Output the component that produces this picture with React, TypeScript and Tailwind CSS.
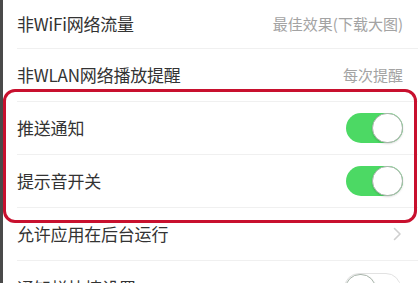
import React from "react";

const font = { fontFamily: '"Noto Sans CJK SC", "Noto Sans", sans-serif' };

function Toggle({ on }: { on: boolean }) {
  return (
    <div
      className={`relative h-[30px] w-[57px] rounded-full ${
        on ? "bg-[#4cd964]" : "bg-white border border-[#e2e2e2]"
      }`}
    >
      <div
        className={`absolute top-0 h-[30px] w-[31px] rounded-full bg-white border border-[#a9b5ab] shadow-[0_1px_2px_rgba(0,0,0,0.15)] ${
          on ? "right-0" : "left-0"
        }`}
      />
    </div>
  );
}

function Chevron() {
  return (
    <svg width="9" height="14" viewBox="0 0 9 14" fill="none">
      <path d="M1.5 1.5L7 7l-5.5 5.5" stroke="#cfcfcf" strokeWidth="1.6" strokeLinecap="round" strokeLinejoin="round" />
    </svg>
  );
}

type Row = { label: string; value?: string; toggle?: boolean; chevron?: boolean };

const rows: Row[] = [
  { label: "非WiFi网络流量", value: "最佳效果(下载大图)" },
  { label: "非WLAN网络播放提醒", value: "每次提醒" },
  { label: "推送通知", toggle: true },
  { label: "提示音开关", toggle: true },
  { label: "允许应用在后台运行", chevron: true },
];

export default function App() {
  return (
    <div className="relative h-[283px] w-[418px] overflow-hidden bg-white border-l-[3px] border-[#4a4a4a]" style={font}>
      <div className="flex flex-col">
        {rows.map((r, i) => (
          <div key={r.label} className={`flex items-stretch pl-[14px] ${i === 0 ? "h-[49px]" : "h-[53px]"}`}>
            <div className="flex flex-1 items-center justify-between border-b border-[#f0f0f0] pr-[15px]">
              <span className="text-[17px] text-[#333333] tracking-[-0.2px]">{r.label}</span>
              {r.value && <span className="text-[15px] text-[#a3a3a3]">{r.value}</span>}
              {r.toggle && <Toggle on />}
              {r.chevron && (
                <div className="pr-[1px]">
                  <Chevron />
                </div>
              )}
            </div>
          </div>
        ))}
        <div className="flex h-[53px] items-start pl-[14px] pr-[17px] pt-[12px] justify-between">
          <span className="text-[17px] text-[#333333] mt-[2px]">通知栏快捷设置</span>
          <Toggle on={false} />
        </div>
      </div>
      <div className="pointer-events-none absolute left-0 top-[89px] h-[134px] w-[414px] rounded-[12px] border-[3px] border-[#c8102e]" />
    </div>
  );
}
